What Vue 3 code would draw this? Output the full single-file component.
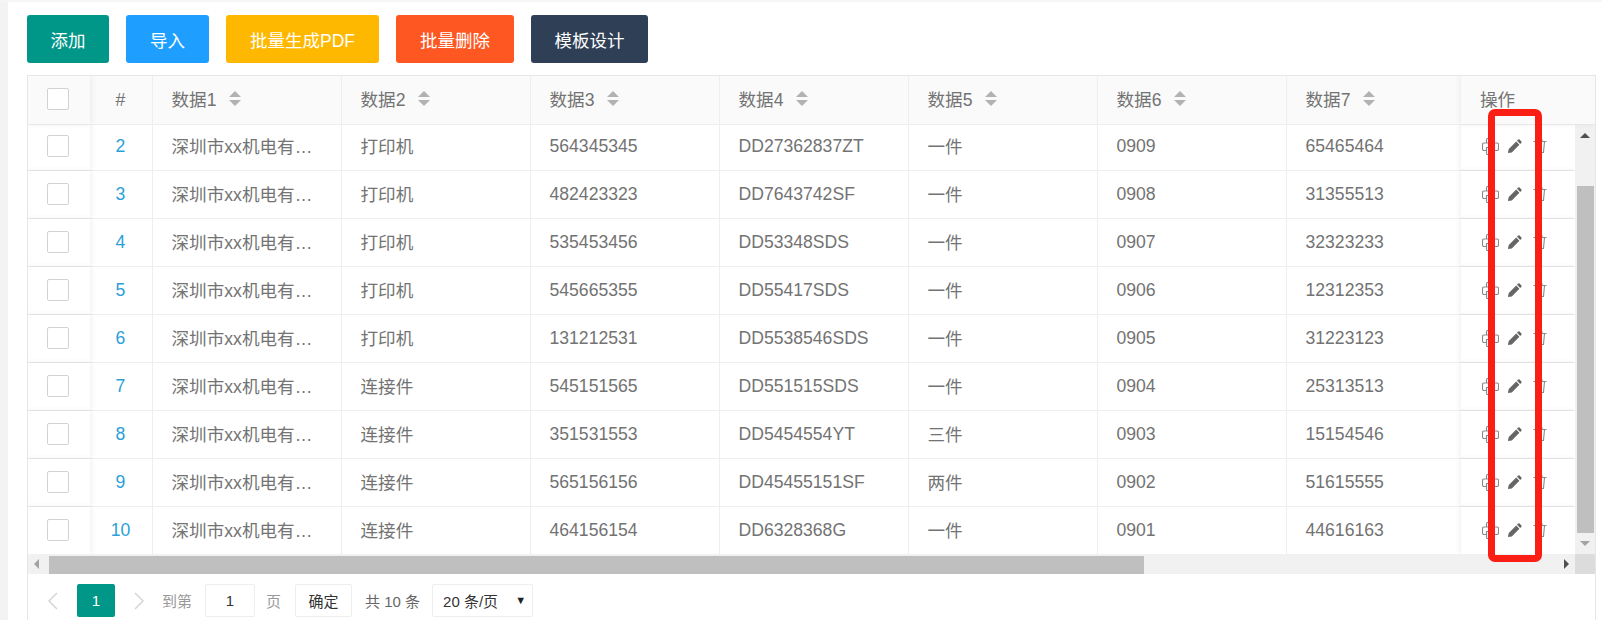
<script setup>
const rows = [
  ['2', '打印机', '564345345', 'DD27362837ZT', '一件', '0909', '65465464'],
  ['3', '打印机', '482423323', 'DD7643742SF', '一件', '0908', '31355513'],
  ['4', '打印机', '535453456', 'DD53348SDS', '一件', '0907', '32323233'],
  ['5', '打印机', '545665355', 'DD55417SDS', '一件', '0906', '12312353'],
  ['6', '打印机', '131212531', 'DD5538546SDS', '一件', '0905', '31223123'],
  ['7', '连接件', '545151565', 'DD551515SDS', '一件', '0904', '25313513'],
  ['8', '连接件', '351531553', 'DD5454554YT', '三件', '0903', '15154546'],
  ['9', '连接件', '565156156', 'DD45455151SF', '两件', '0902', '51615555'],
  ['10', '连接件', '464156154', 'DD6328368G', '一件', '0901', '44616163'],
]
const heads = ['数据1', '数据2', '数据3', '数据4', '数据5', '数据6', '数据7']
const buttons = [
  { label: '添加', cls: 'green' },
  { label: '导入', cls: 'blue' },
  { label: '批量生成PDF', cls: 'yellow' },
  { label: '批量删除', cls: 'orange' },
  { label: '模板设计', cls: 'navy' },
]
</script>

<template>
  <div class="page">
    <div class="toolbar">
      <button v-for="b in buttons" :key="b.label" class="btn" :class="b.cls">{{ b.label }}</button>
    </div>

    <div class="table">
      <div class="row head">
        <div class="cell fix-left"><span class="check"></span></div>
        <div class="cell num-col">#</div>
        <div v-for="h in heads" :key="h" class="cell">
          {{ h }}
          <span class="sort"><i class="up"></i><i class="down"></i></span>
        </div>
        <div class="cell fix-right head-action">操作</div>
      </div>

      <div class="body">
        <div class="rows">
          <div v-for="r in rows" :key="r[0]" class="row">
            <div class="cell fix-left"><span class="check"></span></div>
            <div class="cell num-col link">{{ r[0] }}</div>
            <div class="cell cn">深圳市xx机电有…</div>
            <div class="cell cn">{{ r[1] }}</div>
            <div class="cell">{{ r[2] }}</div>
            <div class="cell">{{ r[3] }}</div>
            <div class="cell cn">{{ r[4] }}</div>
            <div class="cell">{{ r[5] }}</div>
            <div class="cell">{{ r[6] }}</div>
            <div class="cell fix-right action">
              <svg class="ico printer" viewBox="0 0 17 17" fill="none" stroke="#8a8a8a" stroke-width="1.1">
                <path d="M4.5 5V1.5a1 1 0 0 1 1-1h6a1 1 0 0 1 1 1V5M4.5 12.5H2A1.5 1.5 0 0 1 .5 11V6.5A1.5 1.5 0 0 1 2 5h13a1.5 1.5 0 0 1 1.5 1.5V11a1.5 1.5 0 0 1-1.5 1.5h-2.5M4.5 9.5h8v6a1 1 0 0 1-1 1h-6a1 1 0 0 1-1-1zM6.5 12h4M6.5 14h4"/>
              </svg>
              <svg class="ico pencil" viewBox="0 0 14 14">
                <path fill="#666" d="M10.2.6a1 1 0 0 1 1.4 0l1.8 1.8a1 1 0 0 1 0 1.4l-1.2 1.2L9 1.8zM8.2 2.6l3.2 3.2-7.6 7.6L0 14l.6-3.8z"/>
              </svg>
              <svg class="ico trash" viewBox="0 0 14 14" fill="none" stroke="#8a8a8a" stroke-width="1.1">
                <path d="M.5 2.5h13M5 2.5V.8h4v1.7M2.5 2.5l1 11h7l1-11M5.7 5v6M8.3 5v6"/>
              </svg>
            </div>
          </div>
        </div>
        <div class="vbar">
          <i class="arrow-up"></i>
          <div class="vthumb"></div>
          <i class="arrow-down"></i>
        </div>
      </div>

      <div class="hbar">
        <div class="hstart"><i class="arrow-left"></i></div>
        <div class="hthumb"></div>
        <div class="hrest"><i class="arrow-right"></i></div>
        <div class="corner"></div>
      </div>

      <div class="pager">
        <svg class="chev prev" viewBox="0 0 10 18" fill="none" stroke="#d2d2d2" stroke-width="1.4"><path d="M9 1 1 9l8 8"/></svg>
        <span class="current">1</span>
        <svg class="chev next" viewBox="0 0 10 18" fill="none" stroke="#d2d2d2" stroke-width="1.4"><path d="m1 1 8 8-8 8"/></svg>
        <span class="muted goto">到第</span>
        <span class="box input">1</span>
        <span class="muted pg">页</span>
        <span class="box confirm">确定</span>
        <span class="total">共 10 条</span>
        <span class="box limit">20 条/页<i class="caret">▼</i></span>
      </div>
    </div>

    <div class="marker"></div>
  </div>
</template>

<style>
html, body { margin: 0; background: #fff; }
</style>

<style scoped>
.page {
  position: relative;
  box-sizing: border-box;
  width: 1602px;
  height: 620px;
  overflow: hidden;
  background: #fff;
  border-left: 8px solid #f3f3f3;
  border-top: 2px solid #f6f6f6;
  padding: 13px 6px 0 19px;
  font-family: "Liberation Sans", "Noto Sans CJK SC", sans-serif;
  color: #737373;
}
.toolbar { display: flex; gap: 17px; }
.btn {
  height: 48px;
  padding: 0;
  border: 0;
  border-radius: 3px;
  color: #fff;
  font: 17.5px "Liberation Sans", "Noto Sans CJK SC", sans-serif;
}
.green { background: #009688; width: 82px; }
.blue { background: #1e9fff; width: 83px; }
.yellow { background: #ffb800; width: 153px; }
.orange { background: #ff5722; width: 118px; }
.navy { background: #2f4056; width: 117px; }

.table {
  margin-top: 12px;
  height: 545px;
  border: 1px solid #e6e6e6;
  border-bottom: 0;
  box-sizing: border-box;
  overflow: hidden;
}
.row {
  display: flex;
  height: 48px;
  box-sizing: border-box;
  border-bottom: 1px solid #eee;
  font-size: 17.6px;
}
.head { background: #fafafa; height: 49px; position: relative; z-index: 2; }
.head .cell { padding-bottom: 3px; }
.head .num-col { padding-bottom: 0; }
.cell {
  flex: 0 0 189px;
  min-width: 0;
  box-sizing: border-box;
  padding: 0 19px 1px;
  display: flex;
  align-items: center;
  white-space: nowrap;
  border-right: 1px solid #eee;
  background: inherit;
}
.cn { padding-bottom: 3px; }
.body .row { background: #fff; }
.fix-left {
  flex-basis: 61.5px;
  padding: 0 0 1px 19px;
  border-right: 0;
  position: relative;
  z-index: 1;
  box-shadow: 1px 0 6px rgba(0, 0, 0, .07);
}
.num-col { flex-basis: 63px; padding-left: 0; padding-right: 0; justify-content: center; }
.cell:nth-child(9) { flex-basis: 174.5px; border-right: 0; }
.fix-right {
  flex: 1 1 0;
  padding-left: 19px;
  padding-right: 0;
  border-right: 0;
  position: relative;
  box-shadow: -1px 0 6px rgba(0, 0, 0, .07);
}
.check {
  width: 22px;
  height: 22px;
  box-sizing: border-box;
  border: 1px solid #d2d2d2;
  border-radius: 2px;
  background: #fff;
}
.link { color: #2a9fd8; }
.sort {
  display: inline-flex;
  flex-direction: column;
  gap: 3px;
  margin-left: 13px;
}
.up, .down { display: block; width: 0; height: 0; border: 6px solid transparent; border-top: 0; border-bottom: 0; }
.up { border-bottom: 6px solid #b2b2b2; }
.down { border-top: 6px solid #b2b2b2; }

.body { display: flex; height: 429px; overflow: hidden; }
.rows { flex: 1 1 0; min-width: 0; margin-top: -2px; }
.action { padding-left: 21px; }
.ico { flex: none; display: block; }
.printer { width: 17px; height: 17px; }
.pencil { width: 14px; height: 14px; margin-left: 9px; margin-top: -1px; }
.trash { width: 14px; height: 14px; margin-left: 11px; }

.vbar {
  flex: 0 0 20px;
  background: #f1f1f1;
  position: relative;
}
.vthumb {
  position: absolute;
  top: 61px;
  left: 2px;
  right: 1px;
  height: 347px;
  background: #bfbfbf;
}
.arrow-up, .arrow-down, .arrow-left, .arrow-right { position: absolute; width: 0; height: 0; border: 5px solid transparent; }
.arrow-up { top: 8px; left: 5px; border-top: 0; border-bottom: 5px solid #505050; }
.arrow-down { bottom: 8px; left: 5px; border-bottom: 0; border-top: 5px solid #a3a3a3; }

.hbar { display: flex; height: 20px; background: #f1f1f1; }
.hstart { flex: 0 0 21px; position: relative; }
.arrow-left { top: 5px; left: 6px; border-left: 0; border-right: 5px solid #a3a3a3; }
.hthumb { flex: 0 0 1095px; margin-top: 2px; background: #bfbfbf; }
.hrest { flex: 1 1 0; position: relative; }
.arrow-right { top: 5px; right: 6px; border-right: 0; border-left: 5px solid #505050; }
.corner { flex: 0 0 20px; background: #dcdcdc; }

.pager {
  display: flex;
  align-items: center;
  height: 33px;
  margin-top: 10px;
  font-size: 15px;
  white-space: nowrap;
}
.chev { width: 10px; height: 18px; flex: none; }
.prev { margin-left: 20px; }
.current {
  width: 38px;
  height: 33px;
  margin-left: 19px;
  border-radius: 2px;
  background: #009688;
  color: #fff;
  display: flex;
  align-items: center;
  justify-content: center;
}
.next { margin-left: 19px; }
.muted { color: #999; }
.goto { margin-left: 18px; }
.box {
  height: 33px;
  box-sizing: border-box;
  border: 1px solid #eee;
  border-radius: 2px;
  display: flex;
  align-items: center;
  justify-content: center;
  color: #333;
}
.input { width: 50px; margin-left: 13px; }
.pg { margin-left: 11px; }
.confirm { width: 57px; margin-left: 14px; }
.total { margin-left: 13px; color: #666; }
.limit { width: 101px; margin-left: 12px; justify-content: flex-start; padding-left: 10px; position: relative; }
.caret { position: absolute; right: 6px; top: 9px; font-style: normal; font-size: 11px; color: #222; }

.marker {
  position: absolute;
  z-index: 5;
  left: 1480px;
  top: 107px;
  width: 54px;
  height: 453px;
  box-sizing: border-box;
  border: 7px solid #fa1e14;
  border-radius: 7px;
}
</style>
